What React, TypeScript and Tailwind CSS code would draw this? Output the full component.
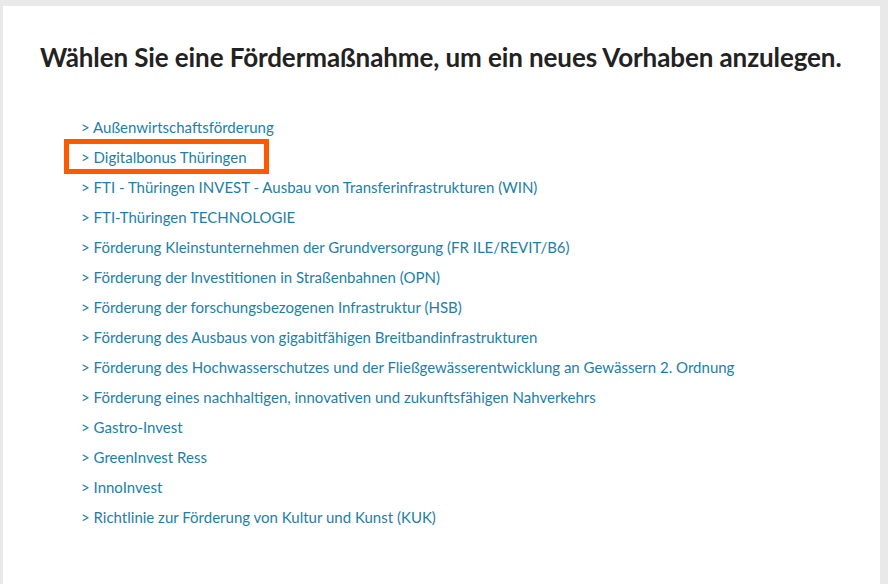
const items = [
  "Außenwirtschaftsförderung",
  "Digitalbonus Thüringen",
  "FTI - Thüringen INVEST - Ausbau von Transferinfrastrukturen (WIN)",
  "FTI-Thüringen TECHNOLOGIE",
  "Förderung Kleinstunternehmen der Grundversorgung (FR ILE/REVIT/B6)",
  "Förderung der Investitionen in Straßenbahnen (OPN)",
  "Förderung der forschungsbezogenen Infrastruktur (HSB)",
  "Förderung des Ausbaus von gigabitfähigen Breitbandinfrastrukturen",
  "Förderung des Hochwasserschutzes und der Fließgewässerentwicklung an Gewässern 2. Ordnung",
  "Förderung eines nachhaltigen, innovativen und zukunftsfähigen Nahverkehrs",
  "Gastro-Invest",
  "GreenInvest Ress",
  "InnoInvest",
  "Richtlinie zur Förderung von Kultur und Kunst (KUK)",
];

export default function App() {
  return (
    <div
      className="h-[584px] w-[888px] overflow-hidden bg-[#e9e9e9] pt-[6px] pl-[3px] pr-[8px]"
      style={{ fontFamily: '"Lato", "Open Sans", sans-serif' }}
    >
      <div className="h-full bg-white px-[37px] pt-[36px]">
        {/* Heading */}
        <h1 className="whitespace-nowrap text-[26px] font-bold leading-[30px] tracking-[-0.1px] text-[#222]">
          Wählen Sie eine Fördermaßnahme, um ein neues Vorhaben anzulegen.
        </h1>

        {/* Measures */}
        <ul className="mt-[40px] pl-[41px]">
          {items.map((item, index) => (
            <li key={index} className="relative h-[30px] text-[15px] leading-[30px] text-[#1b7fa7]">
              {index === 1 && (
                <span className="absolute -top-[3px] -left-[17px] h-[35px] w-[205px] border-[5px] border-[#ff5a00]" />
              )}
              <a href="#" className="relative">
                &gt; {item}
              </a>
            </li>
          ))}
        </ul>
      </div>
    </div>
  );
}
